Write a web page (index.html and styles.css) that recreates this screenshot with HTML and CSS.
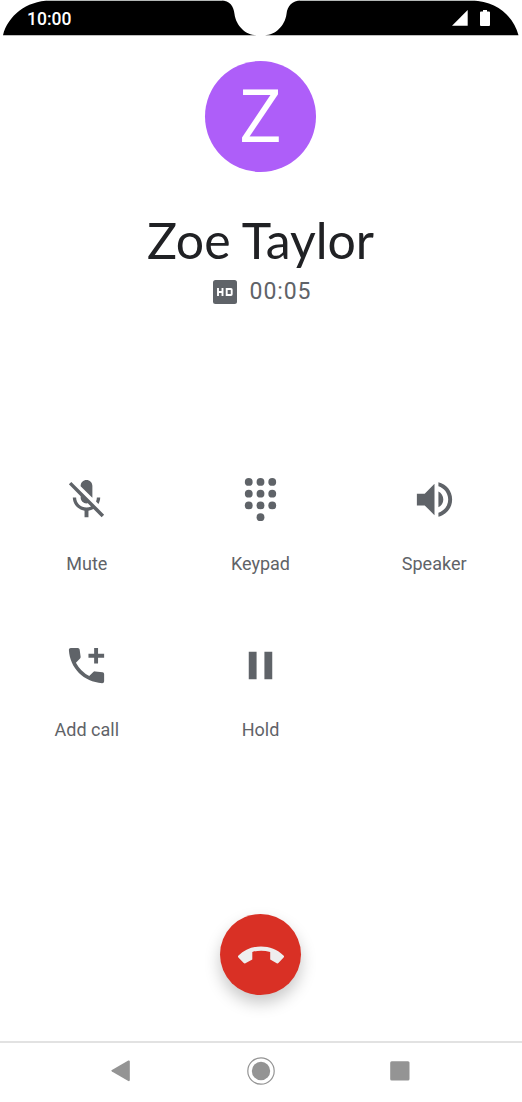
FILE: index.html
```html
<!DOCTYPE html>
<html lang="en">
<head>
  <meta charset="UTF-8">
  <meta name="viewport" content="width=device-width, initial-scale=1.0">
  <title>Call</title>
  <link rel="stylesheet" href="styles.css">
</head>
<body>
  <div class="phone">
    <header class="status-bar">
      <svg class="status-shape" viewBox="0 0 522 36">
        <path fill="#000" d="M3 35.200C8 16 26 1 50 .6H221C230 .6 233.500 6 234.500 14C236 26 246 35.200 256 35.200ZM518.500 35.200C513.500 16 496 1 472 .6H301C292 .6 287.500 6 286.500 14C285 26 275 35.200 265 35.200Z"/>
        <path fill="none" stroke="#b4b8b6" d="M47 .5H222M300 .5H475"/>
      </svg>
      <span class="clock">10:00</span>
      <div class="status-icons">
        <svg width="16" height="16" viewBox="0 0 16 16"><path d="M15.700 0V15.700H0z"/></svg>
        <svg width="10" height="16" viewBox="0 0 10 16"><path d="M3 0h4v1.500h2q1 0 1 1V15q0 1-1 1H1q-1 0-1-1V2.500q0-1 1-1h2z"/></svg>
      </div>
    </header>

    <main>
      <div class="avatar">Z</div>
      <h1>Zoe Taylor</h1>
      <div class="call-info">
        <svg class="hd" viewBox="0 0 24 24">
          <rect width="24" height="24" rx="2.500" fill="#5f6368"/>
          <path fill="none" stroke="#fff" stroke-width="1.900" d="M5 8v8M9.500 8v8M5 12h4.500M13.700 8.950h4.300q.7 0 .7.700v4.700q0 .7-.7.700h-4.300z"/>
        </svg>
        <span class="timer">00:05</span>
      </div>

      <div class="actions">
        <button>
          <svg viewBox="0 0 24 24"><path d="M19 11h-1.700c0 .74-.16 1.430-.43 2.050l1.230 1.230c.56-.98.9-2.090.9-3.280zm-4.020.17c0-.06.02-.11.02-.17V5c0-1.660-1.340-3-3-3S9 3.340 9 5v.18l5.980 5.990zM4.270 3L3 4.270l6.010 6.010V11c0 1.660 1.330 3 2.990 3 .22 0 .44-.03.65-.08l1.660 1.660c-.71.33-1.500.52-2.310.52-2.760 0-5.300-2.100-5.300-5.100H5c0 3.410 2.720 6.230 6 6.720V21h2v-3.280c.91-.13 1.770-.45 2.540-.9L19.730 21 21 19.730 4.270 3z"/></svg>
          <span>Mute</span>
        </button>
        <button>
          <svg viewBox="0 0 24 24">
            <circle cx="6" cy="3" r="2"/><circle cx="12" cy="3" r="2"/><circle cx="18" cy="3" r="2"/>
            <circle cx="6" cy="9" r="2"/><circle cx="12" cy="9" r="2"/><circle cx="18" cy="9" r="2"/>
            <circle cx="6" cy="15" r="2"/><circle cx="12" cy="15" r="2"/><circle cx="18" cy="15" r="2"/>
            <circle cx="12" cy="21" r="2"/>
          </svg>
          <span>Keypad</span>
        </button>
        <button>
          <svg viewBox="0 0 24 24"><path d="M3 9v6h4l5 5V4L7 9H3zm13.500 3c0-1.770-1.020-3.290-2.500-4.030v8.050c1.480-.73 2.500-2.250 2.500-4.020zM14 3.230v2.060c2.890.86 5 3.540 5 6.710s-2.110 5.850-5 6.710v2.060c4.010-.91 7-4.490 7-8.770s-2.990-7.860-7-8.770z"/></svg>
          <span>Speaker</span>
        </button>
        <button>
          <svg viewBox="0 0 24 24"><path d="M4 3H7.600Q8.350 3 8.500 3.800L9 7.500Q9.050 8 8.700 8.400L6.600 10.600Q9 15.100 13.400 17.400L15.600 15.200Q15.950 14.900 16.500 15L20.200 15.500Q21 15.650 21 16.400V20Q21 21 20 21C10.600 20.500 3.500 13.400 3 4Q3 3 4 3zM15.900 3h2v3h3.100v2h-3.100v3h-2V8H13V6h2.900z"/></svg>
          <span>Add call</span>
        </button>
        <button>
          <svg viewBox="0 0 24 24"><path d="M6 19h4V5H6v14zm8-14v14h4V5h-4z"/></svg>
          <span>Hold</span>
        </button>
      </div>

      <button class="end-call">
        <svg viewBox="0 0 48 18"><path d="M24 .5C32.500 .5 40.500 3.500 46.500 9.500Q47.600 10.500 46.600 11.500L41.400 17.100Q40.600 17.900 39.700 17.200L33.200 13.400V5.900Q24 3.500 15.300 5.900V13.400L8.400 17.300Q7.500 17.900 6.700 17.100L1.400 11.500Q.5 10.500 1.500 9.500C7.500 3.500 15.500 .5 24 .5z"/></svg>
      </button>
    </main>

    <nav class="nav-bar">
      <svg width="20" height="22" viewBox="0 0 20 22"><path d="M.9 10.100L17.300.5Q18.800 0 18.800 1.600V20Q18.800 21.600 17.300 21L.9 11.500Q-.2 10.800.9 10.100z"/></svg>
      <svg width="28" height="28" viewBox="0 0 28 28"><circle cx="14" cy="14" r="13.200" fill="none" stroke="#949494" stroke-width="1.200"/><circle cx="14" cy="14" r="9.200"/></svg>
      <svg width="20" height="20" viewBox="0 0 20 20"><rect x=".2" y=".2" width="19.300" height="19.300" rx="1.500"/></svg>
    </nav>
  </div>
</body>
</html>
```
FILE: styles.css
```css
* {
  margin: 0;
  padding: 0;
  box-sizing: border-box;
}
body {
  background-color: #fff;
  font-family: Roboto, Arial, sans-serif;
}
svg {
  display: block;
}
button {
  background: none;
  border: none;
  font-family: inherit;
  cursor: pointer;
}
.phone {
  width: 522px;
  height: 1102px;
  display: flex;
  flex-direction: column;
  overflow: hidden;
}

.status-bar {
  position: relative;
  height: 36px;
  padding: 0 32px 0 27px;
  display: flex;
  align-items: center;
  justify-content: space-between;
  color: #fff;
}
.status-shape {
  position: absolute;
  top: 0;
  left: 0;
  width: 522px;
  height: 36px;
}
.clock {
  position: relative;
  padding-top: 2px;
  font-size: 17.5px;
  font-weight: 500;
}
.status-icons {
  position: relative;
  display: flex;
  gap: 12px;
  fill: #fff;
}

main {
  flex: 1;
  width: 521px;
  display: flex;
  flex-direction: column;
  align-items: center;
}
.avatar {
  width: 111px;
  height: 111px;
  margin-top: 25px;
  border-radius: 50%;
  background-color: #ae5ef9;
  color: #fff;
  font-family: "Open Sans", sans-serif;
  font-size: 74px;
  line-height: 106px;
  text-align: center;
}
h1 {
  margin-top: 36px;
  height: 66px;
  line-height: 64px;
  font-family: Lato, sans-serif;
  font-size: 50px;
  font-weight: 400;
  color: #202124;
  white-space: nowrap;
}
.call-info {
  height: 36px;
  display: flex;
  align-items: center;
  gap: 13px;
  padding-left: 3px;
  color: #5f6368;
}
.hd {
  width: 24px;
  height: 24px;
}
.timer {
  font-size: 23px;
  line-height: 24px;
  letter-spacing: 0.9px;
}

.actions {
  width: 521px;
  margin-top: 166px;
  display: grid;
  grid-template-columns: repeat(3, 1fr);
  grid-auto-rows: 166px;
}
.actions button {
  display: flex;
  flex-direction: column;
  align-items: center;
  justify-content: flex-start;
  gap: 29px;
  color: #5f6368;
  font-size: 18px;
  line-height: 24px;
}
.actions svg {
  width: 47px;
  height: 47px;
  fill: #5f6368;
}

.end-call {
  width: 81px;
  height: 81px;
  margin-top: 106px;
  border-radius: 50%;
  background-color: #d93025;
  box-shadow: 0 8px 16px rgba(0, 0, 0, 0.22);
  display: flex;
  align-items: center;
  justify-content: center;
}
.end-call svg {
  width: 48px;
  height: 18px;
  fill: #eee;
}

.nav-bar {
  height: 61px;
  border-top: 2px solid #e2e2e2;
  padding: 0 112px 3px 111px;
  display: flex;
  align-items: center;
  justify-content: space-between;
  fill: #949494;
}
```
